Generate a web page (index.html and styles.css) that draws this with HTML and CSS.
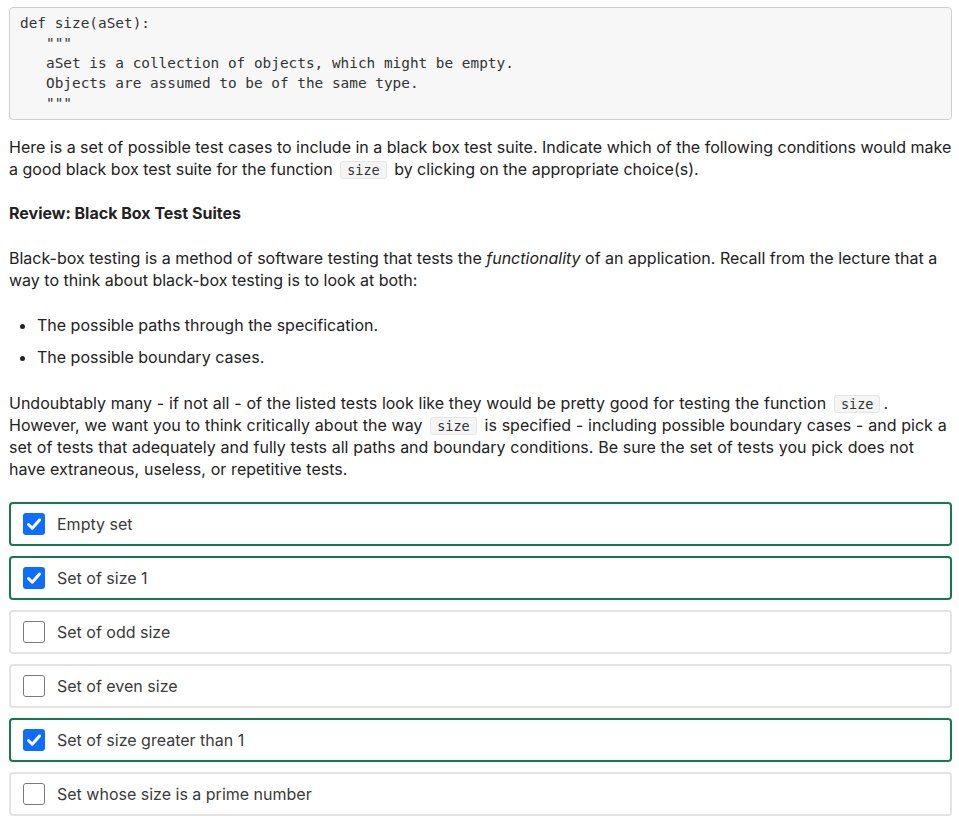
FILE: index.html
```html
<!DOCTYPE html>
<html>
<head>
<meta charset="utf-8">
<link rel="stylesheet" href="styles.css">
</head>
<body>
<div class="page">
<pre class="code">def size(aSet):
   """
   aSet is a collection of objects, which might be empty.
   Objects are assumed to be of the same type.
   """</pre>
<p class="intro">Here is a set of possible test cases to include in a black box test suite. Indicate which of the following conditions would make a good black box test suite for the function <code>size</code> by clicking on the appropriate choice(s).</p>
<p class="heading">Review: Black Box Test Suites</p>
<p class="review">Black-box testing is a method of software testing that tests the <em>functionality</em> of an application. Recall from the lecture that a way to think about black-box testing is to look at both:</p>
<ul>
<li>The possible paths through the specification.</li>
<li>The possible boundary cases.</li>
</ul>
<p class="note">Undoubtably many - if not all - of the listed tests look like they would be pretty good for testing the function <code>size</code>. However, we want you to think critically about the way <code>size</code> is specified - including possible boundary cases - and pick a set of tests that adequately and fully tests all paths and boundary conditions. Be sure the set of tests you pick does not have extraneous, useless, or repetitive tests.</p>
<div class="options">
<label class="option checked"><span class="box"><svg viewBox="0 0 22 22" width="22" height="22"><path d="M5.5 11.5 L9.3 15.2 L16.5 7" fill="none" stroke="#fff" stroke-width="3" stroke-linecap="round" stroke-linejoin="round"/></svg></span><span class="label">Empty set</span></label>
<label class="option checked"><span class="box"><svg viewBox="0 0 22 22" width="22" height="22"><path d="M5.5 11.5 L9.3 15.2 L16.5 7" fill="none" stroke="#fff" stroke-width="3" stroke-linecap="round" stroke-linejoin="round"/></svg></span><span class="label">Set of size 1</span></label>
<label class="option"><span class="box"></span><span class="label">Set of odd size</span></label>
<label class="option"><span class="box"></span><span class="label">Set of even size</span></label>
<label class="option checked"><span class="box"><svg viewBox="0 0 22 22" width="22" height="22"><path d="M5.5 11.5 L9.3 15.2 L16.5 7" fill="none" stroke="#fff" stroke-width="3" stroke-linecap="round" stroke-linejoin="round"/></svg></span><span class="label">Set of size greater than 1</span></label>
<label class="option"><span class="box"></span><span class="label">Set whose size is a prime number</span></label>
</div>
</div>
</body>
</html>
```
FILE: styles.css
```css
html, body {
  margin: 0;
  padding: 0;
  background: #fff;
}
body {
  font-family: Inter, "Noto Sans", sans-serif;
  font-size: 16px;
  line-height: 22px;
  color: #222;
}
.page {
  padding: 7px 7px 0 9px;
}
.code {
  margin: 0 0 16px;
  padding: 5px 10px 6px;
  background: #f7f7f7;
  border: 1px solid #cfcfcf;
  border-radius: 4px;
  font-family: "DejaVu Sans Mono", monospace;
  font-size: 14.4px;
  line-height: 20px;
  color: #333;
}
p {
  margin: 0;
}
.intro {
  margin-bottom: 22px;
}
.heading {
  font-weight: 700;
  margin-bottom: 23px;
}
.review {
  margin-bottom: 23px;
}
.note {
  word-spacing: 0.3px;
  margin-bottom: 22px;
}
ul {
  margin: 0 0 24px;
  padding-left: 28px;
}
li {
  margin-bottom: 10px;
}
li:last-child {
  margin-bottom: 0;
}
code {
  font-family: "DejaVu Sans Mono", monospace;
  font-size: 13.5px;
  line-height: 15px;
  padding: 0 6px;
  margin: 0 3px;
  background: #f5f5f5;
  border: 1px solid #e6e6e6;
  border-radius: 3px;
  color: #333;
  word-spacing: 0;
}
.options {
  display: flex;
  flex-direction: column;
  gap: 10px;
}
.option {
  display: flex;
  align-items: center;
  gap: 12px;
  height: 44px;
  box-sizing: border-box;
  padding: 0 12px;
  border: 2px solid #e3e3e3;
  border-radius: 4px;
  color: #3a3a3a;
}
.option.checked {
  border-color: #147a4e;
}
.box {
  width: 22px;
  height: 22px;
  box-sizing: border-box;
  border: 1.5px solid #7a7a7a;
  border-radius: 3px;
  background: #fff;
  flex: none;
  display: flex;
}
.option.checked .box {
  background: #0d6efd;
  border: none;
}
```
